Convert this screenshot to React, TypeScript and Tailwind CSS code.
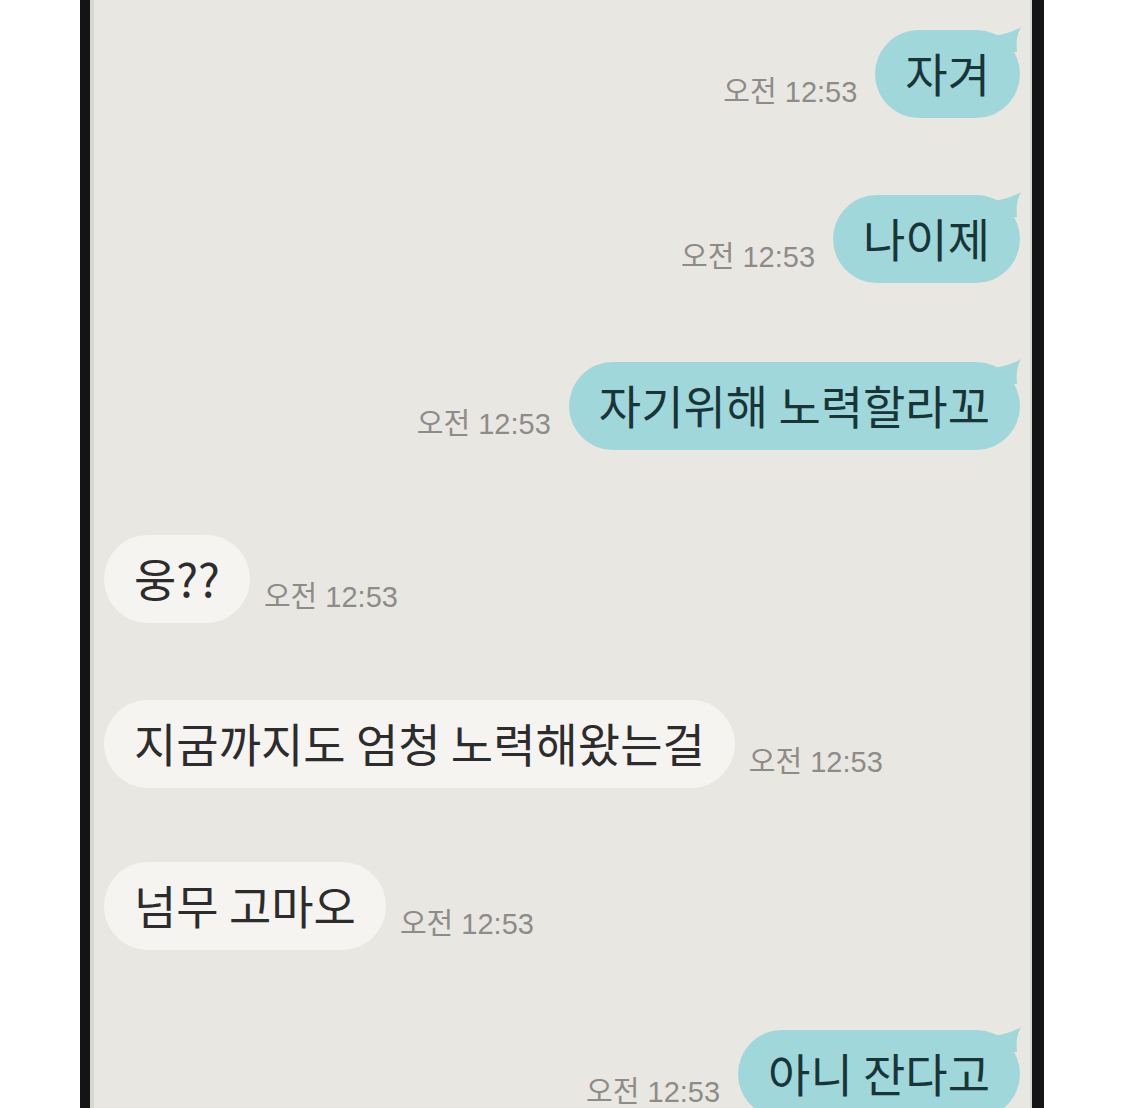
import React from 'react';

type Msg = { text: string; mine: boolean; top: string };

const messages: Msg[] = [
  { text: '자겨', mine: true, top: 'mt-[30px]' },
  { text: '나이제', mine: true, top: 'mt-[77px]' },
  { text: '자기위해 노력할라꼬', mine: true, top: 'mt-[79px]' },
  { text: '웅??', mine: false, top: 'mt-[85px]' },
  { text: '지굼까지도 엄청 노력해왔는걸', mine: false, top: 'mt-[77px]' },
  { text: '넘무 고마오', mine: false, top: 'mt-[74px]' },
  { text: '아니 잔다고', mine: true, top: 'mt-[80px]' },
];

const Time = () => (
  <span className="mb-[11px] shrink-0 text-[29px] leading-none text-[#8e8c88] font-['Liberation_Sans','Noto_Sans_CJK_KR',sans-serif]">
    오전 12:53
  </span>
);

const Bubble: React.FC<{ text: string; mine: boolean }> = ({ text, mine }) => (
  <div
    className={`relative h-[88px] flex items-center rounded-[44px] px-[30px] text-[46px] leading-none whitespace-nowrap font-['Noto_Sans_CJK_KR',sans-serif] ${
      mine ? 'bg-[#a0d7db] text-[#183538]' : 'bg-[#f6f4f1] text-[#2c2c2c]'
    }`}
  >
    {mine && (
      <svg className="absolute -top-[4px] -right-[3px]" width="30" height="30" viewBox="0 0 30 30">
        <path d="M2 10 C10 8 20 6 28 1 C24 8 23 16 24 26 L6 26 Z" fill="#a0d7db" />
      </svg>
    )}
    <span className="pb-[4px]">{text}</span>
  </div>
);

export default function App() {
  return (
    <div className="w-[1125px] h-[1108px] bg-white overflow-hidden">
      <div className="ml-[80px] w-[964px] h-full border-l-[10px] border-r-[12px] border-[#141414] bg-[#d6d6d4] pl-[4px] pr-[2px]">
        <div className="h-full bg-[#e9e7e2] flex flex-col pl-[10px] pr-[10px]">
          {messages.map((m, i) =>
            m.mine ? (
              <div key={i} className={`flex justify-end items-end gap-[18px] ${m.top}`}>
                <Time />
                <Bubble text={m.text} mine />
              </div>
            ) : (
              <div key={i} className={`flex justify-start items-end gap-[14px] ${m.top}`}>
                <Bubble text={m.text} mine={false} />
                <Time />
              </div>
            )
          )}
        </div>
      </div>
    </div>
  );
}
